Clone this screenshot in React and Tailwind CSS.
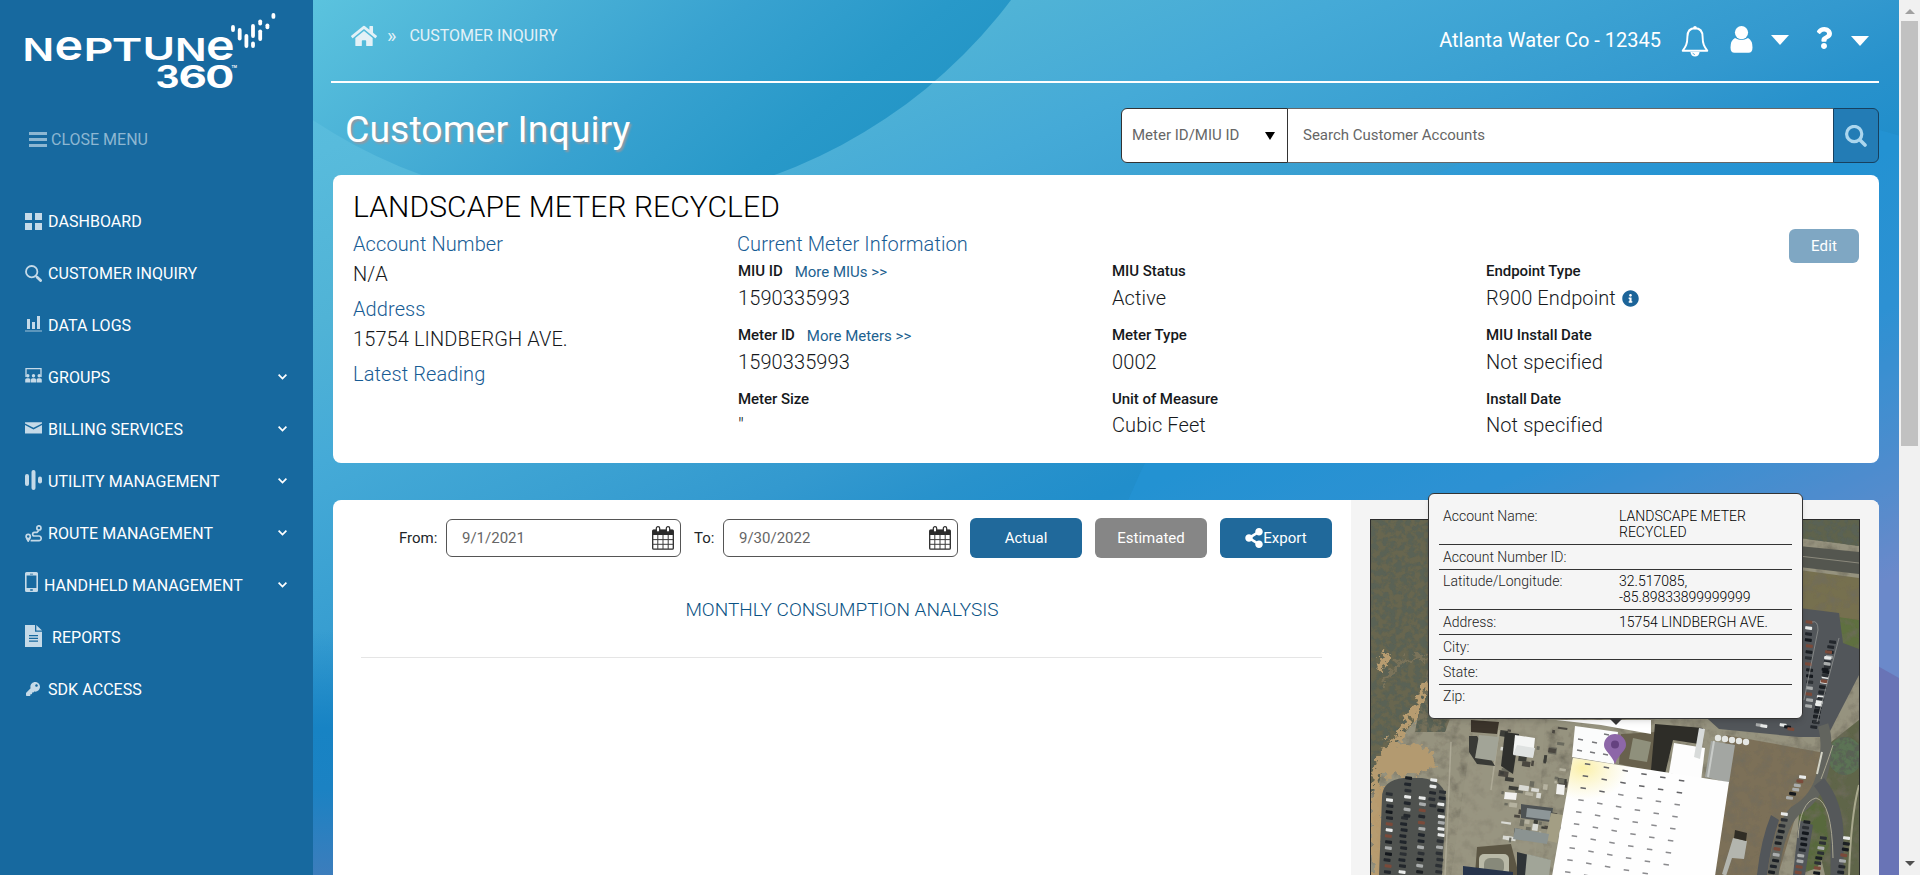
import React from "react";
import { FaHome, FaQuestion, FaShareAlt, FaInfoCircle, FaKey, FaFileAlt, FaBars } from "react-icons/fa";

/* ---------- small drawings ---------- */

const LOGO_LETTERS = [
  ["N", 22.6, 60.5, 31.7, 0],
  ["e", 54.4, 60.3, 42, 28.6],
  ["P", 83.4, 60.5, 31.7, 30],
  ["T", 111.7, 60.5, 31.7, 30.6],
  ["U", 142.6, 60.3, 31.7, 32.6],
  ["N", 175, 60.5, 31.7, 0],
  ["e", 206, 60.3, 42, 28.6],
];
const LOGO_PILLS = [
  [233, 25, 7], [239.7, 28, 12.4], [246.4, 34, 14], [253, 24, 14], [253, 41.6, 6.4],
  [260.2, 19.4, 6], [260.2, 29.4, 11.6], [267.4, 23.4, 5.8], [273.4, 13, 5.8],
];

function Logo() {
  return (
    <svg width="313" height="100" viewBox="0 0 313 100" className="block" fill="#fff" fontFamily="Inter, sans-serif" fontWeight="600">
      {LOGO_LETTERS.map(([ch, x, y, size, len], i) => (
        <text key={i} x={x} y={y} fontSize={size} textLength={len || 31.6} lengthAdjust="spacingAndGlyphs">{ch}</text>
      ))}
      <text x="155.5" y="87.6" fontSize="31.2" fontWeight="700" textLength="24" lengthAdjust="spacingAndGlyphs">3</text>
      <text x="178.5" y="87.6" fontSize="31.2" fontWeight="700" textLength="28.5" lengthAdjust="spacingAndGlyphs">6</text>
      <text x="205.3" y="87.6" fontSize="31.2" fontWeight="700" textLength="29" lengthAdjust="spacingAndGlyphs">0</text>
      <text x="231.5" y="67.5" fontSize="3.4">TM</text>
      {LOGO_PILLS.map(([cx, y, h], i) => (
        <rect key={i} x={cx - 1.9} y={y} width="3.8" height={h} rx="1.9" />
      ))}
    </svg>
  );
}

const IC = "block fill-[#c5dae8]";
const DashboardIcon = () => (
  <svg width="17" height="17" className={IC}><path d="M0 0h7v7H0zM10 0h7v7h-7zM0 10h7v7H0zM10 10h7v7h-7z" /></svg>
);
const SearchIcon = () => (
  <svg width="17" height="17" viewBox="0 0 17 17" className="block" fill="none" stroke="#c5dae8">
    <circle cx="6.7" cy="6.7" r="5.7" strokeWidth="1.8" /><path d="M11 11l1.5 1.5" strokeWidth="1.8" /><path d="M12.2 12.2l3.4 3.4" strokeWidth="2.8" strokeLinecap="round" />
  </svg>
);
const LogsIcon = () => (
  <svg width="17" height="17" className={IC}><path d="M2 4h3v10H2zM7 7h3v7H7zM12 1h3v13h-3z" /><path d="M0 15.5h17v1H0z" opacity=".8" /></svg>
);
const GroupsIcon = () => (
  <svg width="17" height="15" viewBox="0 0 17 15" className={IC}>
    <path d="M1 9V.7h15V9" fill="none" stroke="#c5dae8" strokeWidth="1.3" />
    {[2.8, 8.5, 14.2].map((x) => (
      <g key={x}><circle cx={x} cy="7.8" r="1.7" /><path d={`M${x - 2.6} 14.4v-2.6q0-1.6 1.6-1.6h2q1.6 0 1.6 1.6v2.6z`} /></g>
    ))}
  </svg>
);
const MailIcon = () => (
  <svg width="17" height="12" className={IC}><path d="M0 .2h17v1.2L8.500 5.800 0 1.400z" /><path d="M0 3l8.500 4.500L17 3v8.500H0z" /></svg>
);
const UtilityIcon = () => (
  <svg width="17" height="20" className={IC}><rect x="0" y="4" width="4" height="12" rx="2" /><rect x="6.500" y="0" width="4" height="20" rx="2" /><rect x="13" y="6.500" width="4" height="7" rx="2" /></svg>
);
const RouteIcon = () => (
  <svg width="17" height="17" viewBox="0 0 17 17" className="block" fill="none" stroke="#c5dae8" strokeWidth="1.7">
    <circle cx="3.2" cy="11.400" r="2.100" /><path d="M1.500 13l1.700 3 1.700-3" />
    <circle cx="13.900" cy="2.900" r="2.100" /><path d="M13.900 5.500L12 7.300H9.600q-2 .2-2 1.900T9.600 11h4.600q2 .3 2 2.400t-2 2.300H5.600" />
  </svg>
);
const PhoneIcon = () => (
  <svg width="13" height="20" className={IC}><path fillRule="evenodd" d="M1.500 0h10Q13 0 13 1.500v17q0 1.500-1.500 1.500h-10Q0 20 0 18.500v-17Q0 0 1.500 0zM1.600 3.500v12.500h9.800V3.500zM5.200 17.200h2.600v1.600H5.200zM5 1.700h3v.7H5z" /></svg>
);
const FileIcon = () => (
  <svg width="17" height="22" className={IC}><path fillRule="evenodd" d="M0 0h10v6.700h7V22H0zM4 10v1.300h9V10zM4 12.700V14h9v-1.300zM4 15.400v1.300h9v-1.300z" /><path d="M11.300 0L17 5.500h-5.700z" /></svg>
);
const Chevron = () => (
  <svg width="9" height="6" viewBox="0 0 9 6" className="block" fill="none" stroke="#fff" strokeWidth="1.700"><path d="M.6.7l3.900 3.900L8.400.7" /></svg>
);
const Caret = () => <svg width="18" height="10" className="block fill-white"><path d="M0 0h18L9 10z" /></svg>;
const BellIcon = () => (
  <svg width="28" height="31" viewBox="0 0 28 31" className="block" fill="none" stroke="#fff">
    <path d="M14 2.200c-5 0-7.600 3.500-7.600 8.500 0 7.500-1.700 9.800-4.700 14h24.600c-3-4.200-4.700-6.500-4.700-14 0-5-2.600-8.500-7.600-8.500z" strokeWidth="1.900" strokeLinejoin="round" />
    <circle cx="14" cy="1.800" r="1.800" fill="#fff" stroke="none" />
    <path d="M9.400 26h9.200q-.8 4.500-4.600 4.500T9.400 26z" fill="#fff" stroke="none" /><path d="M11.800 26.800q.4 1.700 2.200 1.800" stroke="#3496cd" strokeWidth=".7" />
  </svg>
);
const UserIcon = () => (
  <svg width="23" height="27" viewBox="0 0 23 27" className="block fill-white">
    <circle cx="11.500" cy="6.600" r="6.600" /><path d="M5 12.100q6.500 3.800 13 0 4.500 2.400 4.500 9.400 0 5.300-4 5.300h-14q-4 0-4-5.300 0-7 4.500-9.400z" />
  </svg>
);
const CalendarIcon = () => (
  <svg width="22" height="24" viewBox="0 0 22 24" className="block">
    <rect x=".7" y="4.200" width="20.600" height="19" rx="1" fill="#fff" stroke="#2b2b2b" strokeWidth="1.300" />
    <path d="M.7 3.800h20.600V9H.7z" fill="#2b2b2b" />
    <path d="M5.800 9v14M11 9v14M16.200 9v14M.7 13.600h20.600M.7 18.300h20.600" stroke="#3c3c3c" strokeWidth="1" />
    <rect x="4.300" y=".6" width="3.400" height="5.600" rx="1.700" fill="#fff" stroke="#2b2b2b" strokeWidth="1.200" />
    <rect x="14.300" y=".6" width="3.400" height="5.600" rx="1.700" fill="#fff" stroke="#2b2b2b" strokeWidth="1.200" />
  </svg>
);

/* ---------- backdrop ---------- */

function Backdrop() {
  return (
    <svg className="absolute inset-0 block h-full w-full" viewBox="313 0 1586 875" preserveAspectRatio="none">
      <defs>
        <linearGradient id="bgBase" gradientUnits="userSpaceOnUse" x1="313" y1="0" x2="801" y2="1073.600">
          <stop offset="0" stopColor="#5cc1de" /><stop offset=".12" stopColor="#58bbdc" /><stop offset=".25" stopColor="#50b3d6" />
          <stop offset=".36" stopColor="#45aad7" /><stop offset=".46" stopColor="#3ba1d2" /><stop offset=".54" stopColor="#3399cf" /><stop offset=".6" stopColor="#2892cc" />
          <stop offset=".66" stopColor="#218ecb" /><stop offset=".79" stopColor="#2f8dcc" /><stop offset=".93" stopColor="#6086c4" /><stop offset="1" stopColor="#8083c0" />
        </linearGradient>
        <linearGradient id="bgArc" gradientUnits="userSpaceOnUse" x1="313" y1="0" x2="641" y2="393">
          <stop offset="0" stopColor="#5bc3de" /><stop offset=".3" stopColor="#49b0d6" /><stop offset=".55" stopColor="#38a2d0" /><stop offset=".8" stopColor="#2899c9" /><stop offset="1" stopColor="#2294c5" />
        </linearGradient>
        <linearGradient id="bgFoot" x1="0" y1="0" x2="0" y2="1"><stop offset="0" stopColor="#1783c4" stopOpacity="0" /><stop offset=".4" stopColor="#1783c4" /><stop offset=".65" stopColor="#1b82c3" /><stop offset="1" stopColor="#3c7dbc" /></linearGradient>
      </defs>
      <rect x="313" width="1586" height="875" fill="url(#bgBase)" />
      <circle cx="598" cy="-311" r="517" fill="url(#bgArc)" />
      <circle cx="1717" cy="748" r="639" fill="#2aa0ea" opacity=".24" />
      <path d="M1820 640Q1860 655 1899 678V875H1820z" fill="#6974b6" />
      <rect x="313" y="630" width="20" height="245" fill="url(#bgFoot)" />
    </svg>
  );
}

/* ---------- sidebar ---------- */

const MENU = [
  { label: "DASHBOARD", icon: <DashboardIcon /> },
  { label: "CUSTOMER INQUIRY", icon: <SearchIcon /> },
  { label: "DATA LOGS", icon: <LogsIcon />, lift: "pb-1" },
  { label: "GROUPS", icon: <GroupsIcon />, open: true, lift: "pb-1" },
  { label: "BILLING SERVICES", icon: <MailIcon />, open: true, lift: "pb-0.5" },
  { label: "UTILITY MANAGEMENT", icon: <UtilityIcon />, open: true, lift: "pb-0.5" },
  { label: "ROUTE MANAGEMENT", icon: <RouteIcon />, open: true },
  { label: "HANDHELD MANAGEMENT", icon: <PhoneIcon />, open: true, lift: "pb-[7px]", w: "w-[19px]" },
  { label: "REPORTS", icon: <FileIcon />, lift: "pb-[3px]", w: "w-[27px]" },
  { label: "SDK ACCESS", icon: <FaKey className="ml-[1px] size-[14px] text-[#c5dae8]" />, lift: "pb-px" },
];

function Sidebar() {
  return (
    <aside className="flex h-full w-[313px] shrink-0 flex-col bg-[#17699f] text-base text-white">
      <Logo />
      <div className="mt-[27px] flex h-6 items-center pl-[29px] text-[#8db7d2]">
        <svg width="18" height="15" className="mr-[4px] block fill-[#8db7d2]"><path d="M0 0h18v3H0zM0 6h18v3H0zM0 12h18v3H0z" /></svg>
        <span className="pt-0.5">CLOSE MENU</span>
      </div>
      <nav className="mt-[44px] flex flex-col">
        {MENU.map((m) => (
          <a key={m.label} className="flex h-[52px] items-center pr-[26px] pl-[25px]">
            <span className={`${m.w || "w-[23px]"} ${m.lift || ""} shrink-0`}>{m.icon}</span>
            <span className="flex-1 pt-0.5 tracking-[0.06px]">{m.label}</span>
            {m.open && <Chevron />}
          </a>
        ))}
      </nav>
    </aside>
  );
}

/* ---------- header ---------- */

function Header() {
  return (
    <header className="ml-[18px] flex h-[83px] w-[1548px] items-start justify-between border-b-2 border-white text-white">
      <div className="flex items-center pt-[23px] pl-[20px] text-[#e3f1f7]">
        <FaHome className="size-[26px]" />
        <span className="ml-[10px] text-xl leading-6">»</span>
        <span className="ml-[13px] text-base leading-6">CUSTOMER INQUIRY</span>
      </div>
      <div className="flex pt-[25px] pr-[10px]">
        <span className="text-xl leading-[31px]">Atlanta Water Co - 12345</span>
        <span className="ml-[20px] pt-px"><BellIcon /></span>
        <span className="ml-[21px] pt-px"><UserIcon /></span>
        <span className="ml-[18px] pt-[10px]"><Caret /></span>
        <FaQuestion className="ml-[25px] mt-[2px] h-[22px] w-[20px]" />
        <span className="ml-[17px] pt-[11px]"><Caret /></span>
      </div>
    </header>
  );
}

function TitleBar() {
  return (
    <div className="ml-[20px] flex h-[92px] w-[1546px] justify-between pt-[25px]">
      <h1 className="pl-[12px] text-[37.500px] leading-[42px] text-white [text-shadow:2px_2px_2px_#8d9aa5]">Customer Inquiry</h1>
      <div className="flex h-[55px] w-[758px] text-[15px] text-[#666]">
        <div className="flex w-[167px] items-center justify-between rounded-l-md border border-[#333] bg-white pr-[12px] pl-[10px]">
          <span>Meter ID/MIU ID</span>
          <svg width="10" height="8" className="block fill-black"><path d="M0 0h10L5 8z" /></svg>
        </div>
        <div className="flex flex-1 items-center border-y border-[#666] bg-white pl-[15px]">Search Customer Accounts</div>
        <div className="flex w-[46px] items-center justify-center rounded-r-md border border-[#17405f] bg-[#237cb5]">
          <svg width="22" height="22" viewBox="0 0 22 22" className="block" fill="none" stroke="#abd6ee">
            <circle cx="9.200" cy="9" r="7.600" strokeWidth="3.200" /><path d="M15 15l5 5" strokeWidth="3.600" strokeLinecap="round" />
          </svg>
        </div>
      </div>
    </div>
  );
}

/* ---------- account card ---------- */

const FIELDS = [
  ["MIU ID", "1590335993", "More MIUs >>"],
  ["MIU Status", "Active"],
  ["Endpoint Type", "R900 Endpoint", null, true],
  ["Meter ID", "1590335993", "More Meters >>"],
  ["Meter Type", "0002"],
  ["MIU Install Date", "Not specified"],
  ["Meter Size", '"'],
  ["Unit of Measure", "Cubic Feet"],
  ["Install Date", "Not specified"],
];

function AccountCard() {
  return (
    <section className="ml-[20px] h-[288px] w-[1546px] rounded-lg bg-white px-[20px] pt-[14px] text-xl leading-[30px] font-[350] tracking-[0.1px] text-[#16191c]">
      <h2 className="text-[30px] leading-9 text-black">LANDSCAPE METER RECYCLED</h2>
      <div className="mt-[4px] flex">
        <div className="w-[384px] shrink-0">
          <p className="text-[#185c94]">Account Number</p>
          <p className="mb-[5px]">N/A</p>
          <p className="text-[#185c94]">Address</p>
          <p className="mb-[5px]">15754 LINDBERGH AVE.</p>
          <p className="text-[#185c94]">Latest Reading</p>
        </div>
        <div className="flex-1">
          <div className="flex h-[30px] justify-between text-[#185c94]">
            <p>Current Meter Information</p>
            <button className="h-[34px] w-[70px] rounded-md bg-[#7fa7c3] text-[15px] font-normal text-white">Edit</button>
          </div>
          <div className="grid grid-cols-[374px_374px_1fr] gap-y-[10px] pl-px">
            {FIELDS.map(([label, value, more, info], i) => (
              <div key={label}>
                <p className="flex h-6 text-[15px] leading-6">
                  <span className="font-medium tracking-[-0.05px]">{label}</span>
                  {more && <span className="ml-[12px] pt-px font-normal tracking-normal text-[#1c618f]">{more}</span>}
                </p>
                <p className={`flex h-[30px] items-center ${i > 5 ? "-mt-px" : ""}`}>
                  {value}
                  {info && <FaInfoCircle className="ml-[6px] size-[17px] text-[#1c6499]" />}
                </p>
              </div>
            ))}
          </div>
        </div>
      </div>
    </section>
  );
}

/* ---------- aerial map ---------- */

function rng(seed) {
  let s = seed;
  return () => ((s = (s * 16807) % 2147483647) / 2147483647);
}
const CAR_COLORS = ["#1c2024", "#e9ebea", "#20252b", "#a9acac", "#23272c", "#7a4a3a", "#14181d", "#2c3034"];
const CAR_ROWS = [
  [15, 272, 12, 356, 6], [29, 296, 27, 356, 6], [33, 256, 32, 300, 6], [47, 276, 45, 356, 6], [58, 258, 57, 290, 7],
  [67, 270, 64, 356, 6], [434, 100, 434, 190, 6], [457, 120, 438, 210, 5], [454, 130, 440, 206, 6], [428, 255, 412, 280, 5],
  [410, 292, 396, 356, 6], [432, 300, 422, 356, 5.500], [448, 316, 440, 356, 5], [472, 316, 464, 356, 5.500], [384, 203, 394, 205, 5],
  [408, 203, 420, 209, 5],
];
const r1 = rng(7);
const CARS = CAR_ROWS.flatMap(([x1, y1, x2, y2, gap]) => {
  const n = Math.max(2, Math.round(Math.hypot(x2 - x1, y2 - y1) / gap));
  return Array.from({ length: n }, (_, i) => ({
    x: x1 + ((x2 - x1) * i) / n + r1() * 1.5, y: y1 + ((y2 - y1) * i) / n, c: CAR_COLORS[Math.floor(r1() * 8)],
  }));
});
const SKYLIGHTS = [];
for (let r = 0; r < 10; r++) for (let c = 0; c < 6; c++) {
  const x = 214 + c * 18.800 - r * 2.200, y = 243 + c * 3.300 + r * 12;
  if (y < 356) SKYLIGHTS.push([x, y]);
}
const r2 = rng(41);
const YARD = Array.from({ length: 70 }, () => ({
  x: 128 + r2() * 62, y: 206 + r2() * 112, w: 2 + r2() * 8, h: 2 + r2() * 5, c: ["#3c3d38", "#d9dad4", "#6a6a5e", "#b5b2a0", "#4a4740"][Math.floor(r2() * 5)],
}));

function AerialMap() {
  return (
    <svg width="488" height="355" viewBox="0 0 488 355" className="block">
      <defs>
        <filter id="leaf" x="0" y="0" width="100%" height="100%">
          <feTurbulence type="fractalNoise" baseFrequency=".16" numOctaves="4" seed="4" result="n" />
          <feColorMatrix in="n" values="0 0 0 0 .1  0 0 0 0 .12  0 0 0 0 .09  0 4.500 0 0 -1.800" result="d" />
          <feComposite in="d" in2="SourceGraphic" operator="in" result="m" />
          <feMerge><feMergeNode in="SourceGraphic" /><feMergeNode in="m" /></feMerge>
        </filter>
        <filter id="soil" x="0" y="0" width="100%" height="100%">
          <feTurbulence type="fractalNoise" baseFrequency=".09" numOctaves="4" seed="9" result="n" />
          <feColorMatrix in="n" values="0 0 0 0 .16  0 0 0 0 .15  0 0 0 0 .11  0 1.800 0 0 -.8" result="d" />
          <feComposite in="d" in2="SourceGraphic" operator="in" result="m" />
          <feMerge><feMergeNode in="SourceGraphic" /><feMergeNode in="m" /></feMerge>
        </filter>
        <filter id="rough"><feTurbulence type="fractalNoise" baseFrequency=".14" numOctaves="4" seed="2" /><feDisplacementMap in="SourceGraphic" scale="16" xChannelSelector="R" yChannelSelector="G" /></filter>
        <radialGradient id="sun"><stop offset="0" stopColor="#fbf0a8" /><stop offset="1" stopColor="#fbf3c0" stopOpacity="0" /></radialGradient>
        <clipPath id="roof"><path d="M202 238l156 24-14 94H181z" /></clipPath>
      </defs>
      <g filter="url(#soil)">
        <path d="M0 0h488v355H0z" fill="#96937f" />
        <path d="M355 215l110 20-40 60-18 60H330z" fill="#7c7059" />
        <path d="M428 50l60 8v70l-60 20z" fill="#76704f" />
        <path d="M453 95l35 5v42l-18-3-17-12z" fill="#5e7040" />
        <path d="M450 230l38-30v155h-34l-14-60z" fill="#5f6548" />
        <path d="M428 290q10-18 26 0l4 36-12 22-20 7z" fill="#59693e" />
      </g>
      <g filter="url(#leaf)">
        <path d="M0 0h62v176l-16 22-30 36-8 28-8 12z" fill="#67664f" />
        <path d="M56 150l30 30-12 32-30 0z" fill="#75705a" />
        <path d="M428 0h60v26l-60-8z" fill="#5f644e" />
        <ellipse cx="474" cy="236" rx="17" ry="19" fill="#5c7355" />
      </g>
      <path d="M0 262l8-2 6 20-4 76H0z" fill="#b79a6d" filter="url(#rough)" />
      <g filter="url(#rough)">
        <path d="M57 160q-8 22-18 38t-24 34-12 46v80" fill="none" stroke="#b79c70" strokeWidth="6" />
        <path d="M16 222l40 4 8 20-20 8-30 2-10-8z" fill="#b39a70" />
        <path d="M62 138q-22-4-34 6t-14 20" fill="none" stroke="#7a735a" strokeWidth="4" />
        <path d="M12 130l8 6-8 12-6 2z" fill="#b79c70" />
      </g>
      {/* roads and parking */}
      <path d="M428 26l60 6v22l-60-7z" fill="#54564f" /><path d="M428 36l60 7" stroke="#8b897c" strokeWidth="1" />
      <path d="M428 88l40 5 4 30 16 6v26l-32 62h-28l-80-8-20-18 100 2z" fill="#52565a" />
      <path d="M11 278q0-18 22-20h18q24 3 24 22l-4 75H8z" fill="#4f524f" />
      <path d="M452 205q6 18 0 46t-28 40q-16 16-22 64" fill="none" stroke="#62645e" strokeWidth="11" />
      <path d="M448 262q18 22 18 54v39" fill="none" stroke="#55585a" strokeWidth="13" />
      <path d="M408 300q-8 24-12 55h-10q4-36 14-60zM428 300l-6 55h12l8-50z" fill="#52565a" />
      <path d="M427 318q2-36 18-40 16 4 17 60M462 225q-8 24-12 34" fill="none" stroke="#aaa792" strokeWidth="1" />
      <path d="M478 355q2-60 10-90" fill="none" stroke="#a9a98e" strokeWidth="2" />
      <path d="M451 232l-5 22" stroke="#d4d4c6" strokeWidth="2" />
      {/* yard and concrete */}
      <path d="M84 200h20l-10 60-14 96h24l60-6 10-150z" fill="#9a9784" opacity=".55" />
      <path d="M80 222l-6 134M128 210l-8 60" stroke="#b7b3a0" strokeWidth="1.500" opacity=".7" />
      {YARD.map((d, i) => <rect key={i} x={d.x} y={d.y} width={d.w} height={d.h} fill={d.c} transform={`rotate(8 ${d.x} ${d.y})`} />)}
      <path d="M100 200l28 2-2 12-26-2z" fill="#3b342b" /><path d="M98 216h8l18 30-18-2-8-12z" fill="#393a36" />
      <path d="M108 215l20 2-4 24-20-3z" fill="#a2a497" />
      <path d="M134 212l14 2-6 40-12-8z" fill="#2f302d" /><path d="M144 215l20 3-2 19-20-3z" fill="#f4f5f4" />
      <path d="M146 225l18 3-2 10-20-3z" fill="#dfe2e1" />
      <path d="M150 284l32 4-2 14-30-4z" fill="#4d5253" /><path d="M156 288l24 3-1 9-24-3z" fill="#8d9698" />
      <path d="M180 293l12 2-6 28-12-3z" fill="#a39e84" />
      <path d="M144 308l34 6-2 10-34-5z" fill="#8b9391" />
      <path d="M106 327l34-3 8 31h-44z" fill="#5c5644" /><rect x="108" y="334" width="30" height="22" rx="5" fill="#b9b9a7" /><rect x="113" y="338" width="20" height="16" rx="6" fill="#87897a" />
      <path d="M146 332l32 8-4 16h-28z" fill="#2f3437" /><path d="M156 334l24 6-2 16h-24z" fill="#a1a598" />
      <path d="M92 346l50 6v4H92z" fill="#27344b" />
      <path d="M134 272l12 1-1 7-12-1zM186 264l8 1-1 10-8-1z" fill="#f2f2f0" />
      {/* plant buildings */}
      <path d="M250 214l36-2 14 16-8 26-44-10z" fill="#68614d" /><path d="M262 218l18 4-4 20-18-3z" fill="#8f907c" />
      <path d="M284 204l48 4-4 16-26-4-8 34-14-4z" fill="#2e2d28" />
      <path d="M185 200h95v14l-50-9z" fill="#fff" />
      <path d="M204 206l43 6-4 32-42-7z" fill="#fbfcfc" />
      <path d="M303 223l31 5-4 33-32-8z" fill="#fdfdfd" /><path d="M328 208l6 1-5 30-6-2z" fill="#d8dbda" />
      <path d="M340 221l24 4-6 38-24-6z" fill="#a3a6a2" /><path d="M343 221l-6 36" stroke="#c8cbc8" strokeWidth="2" />
      {[347, 354, 361, 368, 375].map((x, i) => <circle key={x} cx={x} cy={218 + i} r="3.200" fill="#e5e7e4" />)}
      <path d="M202 238l156 24-14 94H181z" fill="#fefefe" />
      <ellipse cx="212" cy="248" rx="46" ry="32" fill="url(#sun)" clipPath="url(#roof)" />
      {SKYLIGHTS.map(([x, y], i) => <rect key={i} x={x} y={y} width="5.500" height="1.500" fill={i < 14 ? "#626265" : "#8b8b8e"} transform={`rotate(9 ${x} ${y})`} />)}
      {[[207, 219], [221, 222], [206, 230], [233, 214], [232, 234], [219, 232]].map(([x, y], i) => <path key={i} d={`M${x} ${y}l5 1`} stroke="#76777a" strokeWidth="1.400" />)}
      <path d="M362 318l14 3-3 18-12-1-6 18-4-2z" fill="#b3b5ae" /><path d="M364 310l12 3-1 8-12-3z" fill="#302d25" />
      {/* vehicles */}
      {CARS.map((c, i) => <rect key={i} x={c.x} y={c.y} width="7" height="3.200" rx="1" fill={c.c} transform={`rotate(8 ${c.x} ${c.y})`} />)}
      <path d="M441 102q6-2 6 8l-14 70M468 118l-22 84" fill="none" stroke="#8f9290" strokeWidth=".8" />
    </svg>
  );
}

const POPUP = [
  ["Account Name:", "LANDSCAPE METER RECYCLED", "pt-1"],
  ["Account Number ID:", "", "pt-1"],
  ["Latitude/Longitude:", "32.517085, -85.89833899999999", "pt-[3px]"],
  ["Address:", "15754 LINDBERGH AVE.", "pt-1"],
  ["City:", "", "pt-1"],
  ["State:", "", "pt-1"],
  ["Zip:", "", "pt-[3px]"],
];

function MapPanel() {
  return (
    <div className="w-[528px] shrink-0 rounded-tr-lg bg-[#f4f4f4] pt-[19px] pl-[19px]">
      <div className="relative h-[357px] w-[490px] border border-[#2b2b2b]">
        <AerialMap />
        <svg width="22" height="30" viewBox="0 0 22 30" className="absolute top-[214px] left-[233px]">
          <path d="M11 0a11 11 0 0 1 11 11c0 6-7.500 9-11 19C7.500 20 0 17 0 11A11 11 0 0 1 11 0z" fill="#8d67a8" /><circle cx="11" cy="10.500" r="4" fill="#65427f" />
        </svg>
        <div className="absolute top-[-27px] left-[57px] w-[375px] rounded-md border border-[#333] bg-[#f5f5f5] px-[10px] pt-[10px] pb-[10px] text-sm leading-4 font-light shadow-md">
          {POPUP.map(([k, v, pad], i) => (
            <div key={k} className={`flex pb-1 pl-[4px] ${pad} ${i < 6 ? "border-b border-[#333]" : ""}`}>
              <span className="w-[176px] shrink-0 text-[#222]">{k}</span>
              <span className="w-[150px] whitespace-normal text-black">{v}</span>
            </div>
          ))}
          <svg width="14" height="7" className="absolute bottom-[-7px] left-[180px] block fill-[#333]"><path d="M0 0h14L7 7z" /></svg>
        </div>
      </div>
    </div>
  );
}

/* ---------- consumption ---------- */

function DateInput({ value }) {
  return (
    <div className="flex h-[38px] w-[235px] items-center justify-between rounded-md border border-[#555] pr-[6px] pl-[15px] text-[15px] text-[#666]">
      <span>{value}</span>
      <CalendarIcon />
    </div>
  );
}

const BTN = "flex h-[40px] w-[112px] items-center justify-center rounded-md text-[15px] text-white";

function Consumption() {
  return (
    <section className="mt-[37px] ml-[20px] flex h-[375px] w-[1546px] rounded-t-lg bg-white text-[#212529]">
      <div className="flex-1">
        <div className="flex items-center pt-[18px] pl-[66px] text-[15px]">
          <span className="w-[47px]">From:</span>
          <DateInput value="9/1/2021" />
          <span className="w-[42px] pl-[13px]">To:</span>
          <DateInput value="9/30/2022" />
          <button className={`ml-[12px] bg-[#20699b] ${BTN}`}>Actual</button>
          <button className={`ml-[13px] bg-[#868686] ${BTN}`}>Estimated</button>
          <button className={`ml-[13px] bg-[#20699b] ${BTN}`}><FaShareAlt className="h-[20px] w-[18px]" />Export</button>
        </div>
        <h3 className="mt-[40px] text-center text-[19px] leading-6 font-[350] text-[#0a5284]">MONTHLY CONSUMPTION ANALYSIS</h3>
        <div className="mt-[35px] ml-[28px] h-px w-[961px] bg-[#e5e5e5]" />
      </div>
      <MapPanel />
    </section>
  );
}

function Scrollbar() {
  return (
    <div className="flex h-full w-[21px] shrink-0 flex-col items-center bg-[#f1f1f1]">
      <svg width="10" height="5" className="mt-[9px] block fill-[#a0a0a0]"><path d="M5 0l5 5H0z" /></svg>
      <div className="mt-[7px] h-[425px] w-[17px] bg-[#c1c1c1]" />
      <svg width="10" height="5" className="mt-auto mb-[9px] block fill-[#505050]"><path d="M0 0h10L5 5z" /></svg>
    </div>
  );
}

export default function App() {
  return (
    <div className="flex h-[875px] w-[1920px] overflow-hidden font-['Roboto',sans-serif]">
      <Sidebar />
      <main className="relative h-full flex-1 overflow-hidden">
        <Backdrop />
        <div className="relative flex flex-col">
          <Header />
          <TitleBar />
          <AccountCard />
          <Consumption />
        </div>
      </main>
      <Scrollbar />
    </div>
  );
}
